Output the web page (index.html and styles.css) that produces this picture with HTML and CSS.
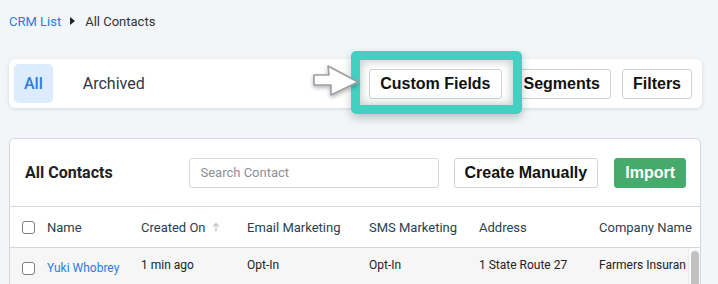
FILE: index.html
```html
<!DOCTYPE html>
<html lang="en">
<head>
<meta charset="utf-8">
<title>All Contacts</title>
<link rel="stylesheet" href="styles.css">
</head>
<body>
<div class="page">
  <nav class="crumbs">
    <a class="crumb-link" href="#">CRM List</a>
    <span class="crumb-sep"></span>
    <span class="crumb-current">All Contacts</span>
  </nav>

  <div class="toolbar">
    <div class="tabs">
      <span class="tab active">All</span>
      <span class="tab">Archived</span>
    </div>
    <div class="actions">
      <button class="btn">Custom Fields</button>
      <button class="btn">Segments</button>
      <button class="btn">Filters</button>
    </div>
  </div>

  <section class="card">
    <header class="card-head">
      <h2 class="card-title">All Contacts</h2>
      <div class="card-tools">
        <input class="search" type="text" placeholder="Search Contact">
        <button class="btn">Create Manually</button>
        <button class="btn btn-green">Import</button>
      </div>
    </header>
    <div class="row head-row">
      <span class="cell c-check"><span class="checkbox"></span></span>
      <span class="cell c-name">Name</span>
      <span class="cell c-created">Created On <svg class="sort" width="8" height="10" viewBox="0 0 8 10"><path d="M4 1.5V9.5M1.3 4.3L4 1.5L6.7 4.3" fill="none" stroke="#c2c6cc" stroke-width="1.3"/></svg></span>
      <span class="cell c-email">Email Marketing</span>
      <span class="cell c-sms">SMS Marketing</span>
      <span class="cell c-addr">Address</span>
      <span class="cell c-company">Company Name</span>
    </div>
    <div class="body">
      <div class="rows">
        <div class="row data-row">
          <span class="cell c-check"><span class="checkbox"></span></span>
          <span class="cell c-name"><a class="name-link" href="#">Yuki Whobrey</a></span>
          <span class="cell c-created">1 min ago</span>
          <span class="cell c-email">Opt-In</span>
          <span class="cell c-sms">Opt-In</span>
          <span class="cell c-addr">1 State Route 27</span>
          <span class="cell c-company">Farmers Insuran</span>
        </div>
      </div>
      <div class="scrollbar"><span class="thumb"></span></div>
    </div>
  </section>

  <div class="highlight"></div>
  <svg class="pointer" width="56" height="42" viewBox="0 0 56 42">
    <defs>
      <filter id="sh" x="-30%" y="-30%" width="160%" height="170%">
        <feDropShadow dx="0" dy="2" stdDeviation="2" flood-color="#000" flood-opacity="0.3"/>
      </filter>
    </defs>
    <path d="M5 13 L20 13 L19 4 L49 20 L22 33 L22 23 L5 23 Z" fill="#fff" stroke="#9a9ea3" stroke-width="1.6" stroke-linejoin="round" filter="url(#sh)"/>
  </svg>
</div>
</body>
</html>
```

FILE: styles.css
```css
html, body {
  margin: 0;
  padding: 0;
  overflow: hidden;
  background: #f3f6f9;
}

.page {
  position: relative;
  padding: 12px 16px 0 9px;
  font-family: Roboto, "Liberation Sans", Arial, sans-serif;
  color: #2d3748;
  height: 284px;
  box-sizing: border-box;
}

/* breadcrumb */
.crumbs {
  display: flex;
  align-items: center;
  height: 18px;
  font-size: 13px;
}
.crumb-link {
  color: #2a7de1;
  text-decoration: none;
}
.crumb-sep {
  width: 0;
  height: 0;
  border-top: 4px solid transparent;
  border-bottom: 4px solid transparent;
  border-left: 5px solid #222;
  margin: 0 10px 0 9px;
}
.crumb-current {
  color: #333;
}

/* top toolbar */
.toolbar {
  margin-top: 29px;
  height: 49px;
  box-sizing: border-box;
  padding: 5px 10px 5px 5px;
  background: #fff;
  border-radius: 6px;
  box-shadow: 0 1px 4px rgba(0, 0, 0, 0.12);
  display: flex;
  align-items: center;
  justify-content: space-between;
}
.tabs {
  display: flex;
  gap: 20px;
}
.tab {
  height: 39px;
  display: flex;
  align-items: center;
  padding: 0 10px;
  font-size: 16px;
  color: #2d3748;
  border-radius: 5px;
}
.tab.active {
  background: #dcebfd;
  color: #2a7de1;
  font-weight: 500;
}
.actions {
  display: flex;
  gap: 11px;
}

.btn {
  height: 30px;
  padding: 0 10px;
  background: #fff;
  border: 1px solid #cfd2d6;
  border-radius: 3px;
  font-family: "Liberation Sans", Arial, sans-serif;
  font-weight: 700;
  font-size: 16px;
  color: #111;
  cursor: pointer;
}
.btn-green {
  background: #45aa6c;
  border-color: #45aa6c;
  color: #fff;
}

/* table card */
.card {
  margin-top: 30px;
  margin-right: 1px;
  background: #fff;
  border: 1px solid #d3d7dc;
  border-radius: 5px;
  overflow: hidden;
}
.card-head {
  height: 67px;
  box-sizing: border-box;
  padding: 0 14px 0 15px;
  display: flex;
  align-items: center;
  justify-content: space-between;
}
.card-title {
  margin: 0;
  font-size: 16px;
  font-weight: 700;
  color: #222;
}
.card-tools {
  display: flex;
  align-items: center;
  gap: 15px;
}
.card-tools .btn + .btn {
  margin-left: 1px;
}
.search {
  width: 250px;
  height: 30px;
  box-sizing: border-box;
  border: 1px solid #d5d8dc;
  border-radius: 3px;
  padding: 0 11px;
  font-family: Roboto, sans-serif;
  font-size: 13px;
  color: #333;
  outline: none;
}
.search::placeholder {
  color: #8a8f96;
}

.row {
  display: flex;
  align-items: center;
  font-size: 13px;
  white-space: nowrap;
}
.head-row {
  height: 40px;
  border-top: 1px solid #d3d7dc;
  border-bottom: 1px solid #d3d7dc;
  color: #2c3e50;
}
.cell {
  flex: none;
  overflow: hidden;
}
.c-check { width: 25px; padding-left: 12px; display: flex; }
.c-name { width: 94px; }
.c-created { width: 106px; display: flex; align-items: center; }
.c-email { width: 122px; }
.c-sms { width: 110px; }
.c-addr { width: 120px; }
.c-company { flex: 1; }
.sort { margin-left: 6px; }

.checkbox {
  width: 13px;
  height: 13px;
  box-sizing: border-box;
  border: 1px solid #7a7f86;
  border-radius: 3px;
  background: #fff;
}

.body {
  display: flex;
  height: 120px;
}
.rows {
  flex: 1;
  overflow: hidden;
  background: #f6f6f6;
}
.data-row {
  align-items: flex-start;
  padding-top: 9px;
  height: 38px;
  box-sizing: border-box;
  font-size: 12px;
  line-height: 16px;
  color: #222;
}
.data-row .c-check { padding-top: 5px; }
.data-row .c-company { flex: 1; }
.name-link {
  display: inline-block;
  padding-top: 3px;
  color: #2a7de1;
  text-decoration: none;
}
.scrollbar {
  width: 11px;
  border-left: 1px solid #ececec;
  background: #fafafa;
  padding-top: 3px;
  display: flex;
  justify-content: center;
}
.thumb {
  width: 8px;
  height: 60px;
  border-radius: 4px;
  background: #c1c1c1;
}

/* annotation overlays */
.highlight {
  position: absolute;
  left: 351px;
  top: 51px;
  width: 171px;
  height: 63px;
  box-sizing: border-box;
  border: 9px solid #42d0c3;
  border-radius: 5px;
  box-shadow: 0 4px 10px rgba(0, 0, 0, 0.22), inset 0 0 9px 2px rgba(0, 50, 40, 0.22);
}
.pointer {
  position: absolute;
  left: 309px;
  top: 62px;
}
```
